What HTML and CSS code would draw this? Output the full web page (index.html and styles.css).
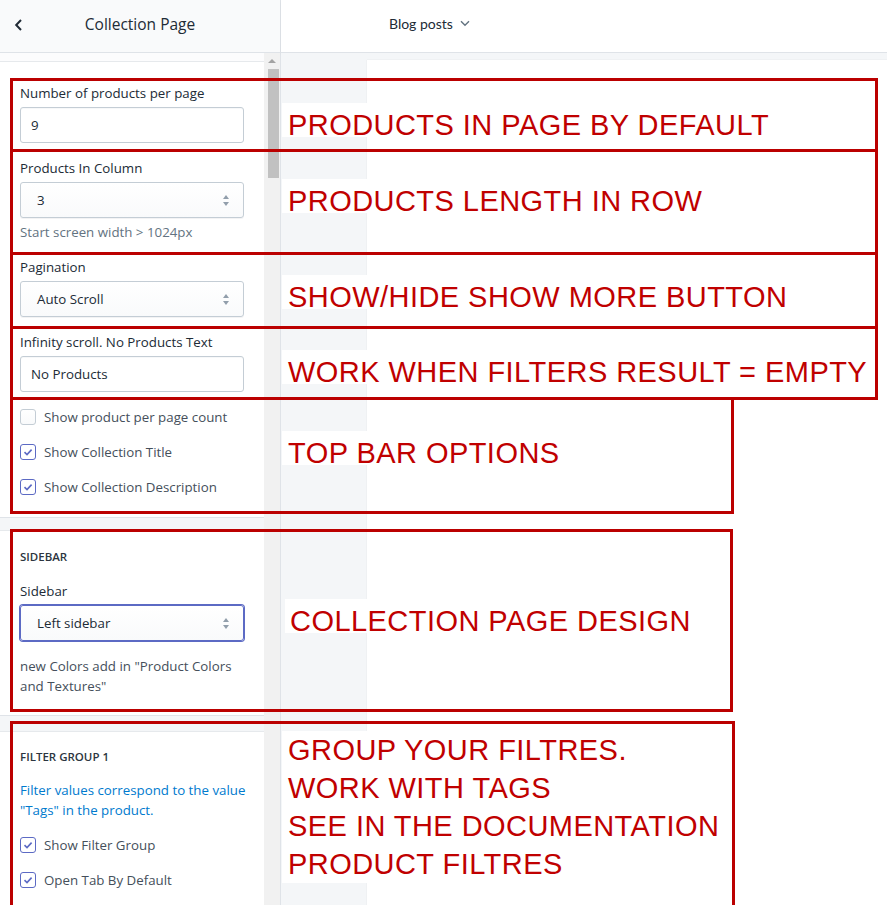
FILE: index.html
```html
<!DOCTYPE html>
<html lang="en">
<head>
<meta charset="utf-8">
<title>Collection Page</title>
<link rel="stylesheet" href="styles.css">
</head>
<body>
<div class="app">
  <aside class="sidebar">
    <header class="side-head">
      <span class="back"><svg width="9" height="12" viewBox="0 0 9 12"><path d="M7 1 L2.2 6 L7 11" fill="none" stroke="#212b36" stroke-width="2"/></svg></span>
      <h1 class="side-title">Collection Page</h1>
      <span></span>
    </header>
    <div class="side-body">
      <div class="side-scroll">
        <div class="top-strip"></div>
        <section class="card card-main">
          <div class="field">
            <div class="label">Number of products per page</div>
            <div class="input">9</div>
          </div>
          <div class="field">
            <div class="label">Products In Column</div>
            <div class="select"><span>3</span><span class="arrows"></span></div>
            <div class="help">Start screen width &gt; 1024px</div>
          </div>
          <div class="field">
            <div class="label">Pagination</div>
            <div class="select"><span>Auto Scroll</span><span class="arrows"></span></div>
          </div>
          <div class="field">
            <div class="label">Infinity scroll. No Products Text</div>
            <div class="input">No Products</div>
          </div>
          <div class="check"><span class="box"></span><span>Show product per page count</span></div>
          <div class="check"><span class="box on"><svg width="14" height="14" viewBox="0 0 14 14"><path d="M3.5 7.2 L6 9.6 L10.6 4.6" fill="none" stroke="#5c6ac4" stroke-width="1.6"/></svg></span><span>Show Collection Title</span></div>
          <div class="check"><span class="box on"><svg width="14" height="14" viewBox="0 0 14 14"><path d="M3.5 7.2 L6 9.6 L10.6 4.6" fill="none" stroke="#5c6ac4" stroke-width="1.6"/></svg></span><span>Show Collection Description</span></div>
        </section>
        <section class="card card-sidebar">
          <div class="heading">SIDEBAR</div>
          <div class="field">
            <div class="label">Sidebar</div>
            <div class="select focus"><span>Left sidebar</span><span class="arrows"></span></div>
          </div>
          <div class="note">new Colors add in "Product Colors and Textures"</div>
        </section>
        <section class="card card-filter">
          <div class="heading">FILTER GROUP 1</div>
          <div class="info">Filter values correspond to the value "Tags" in the product.</div>
          <div class="check"><span class="box on"><svg width="14" height="14" viewBox="0 0 14 14"><path d="M3.5 7.2 L6 9.6 L10.6 4.6" fill="none" stroke="#5c6ac4" stroke-width="1.6"/></svg></span><span>Show Filter Group</span></div>
          <div class="check"><span class="box on"><svg width="14" height="14" viewBox="0 0 14 14"><path d="M3.5 7.2 L6 9.6 L10.6 4.6" fill="none" stroke="#5c6ac4" stroke-width="1.6"/></svg></span><span>Open Tab By Default</span></div>
        </section>
      </div>
      <div class="scrollbar"><span class="sb-arrow"></span><span class="sb-thumb"></span></div>
    </div>
  </aside>
  <main class="main">
    <div class="topbar">
      <span>Blog posts</span>
      <svg width="10" height="7" viewBox="0 0 10 7"><path d="M1 1.2 L5 5.2 L9 1.2" fill="none" stroke="#637381" stroke-width="1.4"/></svg>
    </div>
    <div class="canvas"><div class="preview"></div></div>
  </main>
</div>

<div class="notes">
  <div class="nbox nb1"></div>
  <div class="nbox nb2"></div>
  <div class="nbox nb3"></div>
  <div class="nbox nb4"></div>
  <div class="nbox nb5"></div>
  <div class="nbox nb6"></div>
  <div class="nbox nb7"></div>
  <div class="ntext nt1">PRODUCTS IN PAGE BY DEFAULT</div>
  <div class="ntext nt2">PRODUCTS LENGTH IN ROW</div>
  <div class="ntext nt3">SHOW/HIDE SHOW MORE BUTTON</div>
  <div class="ntext nt4">WORK WHEN FILTERS RESULT = EMPTY</div>
  <div class="ntext nt5">TOP BAR OPTIONS</div>
  <div class="ntext nt6">COLLECTION PAGE DESIGN</div>
  <div class="ntext nt7">GROUP YOUR FILTRES.<br>WORK WITH TAGS<br>SEE IN THE DOCUMENTATION<br>PRODUCT FILTRES</div>
</div>
</body>
</html>
```
FILE: styles.css
```css
html, body {
  margin: 0;
  width: 887px;
  height: 905px;
  overflow: hidden;
}
body {
  position: relative;
  font-family: "Open Sans", "Segoe UI", sans-serif;
  color: #212b36;
  background: #fff;
}
.app {
  display: flex;
  height: 905px;
}
.sidebar {
  width: 280px;
  flex: none;
  border-right: 1px solid #dfe3e8;
  display: flex;
  flex-direction: column;
}
.side-head {
  flex: none;
  border-bottom: 1px solid #dfe3e8;
  background: #f9fafb;
  display: grid;
  grid-template-columns: 40px 1fr 40px;
  align-items: center;
  box-sizing: border-box;
  padding-bottom: 4px;
  height: 53px;
}
.back {
  display: flex;
  padding-left: 14px;
  padding-top: 2px;
}
.side-title {
  margin: 0;
  font-size: 15.5px;
  font-weight: 400;
  text-align: center;
}
.side-body {
  flex: 1;
  min-height: 0;
  display: flex;
}
.side-scroll {
  flex: 1;
  overflow: hidden;
  background: #f4f6f8;
}
.top-strip {
  height: 8px;
  background: #fcfcfd;
}
.card {
  background: #fff;
  border-top: 1px solid #e6e9ec;
  border-bottom: 1px solid #dfe3e8;
  padding: 0 20px;
}
.card-main {
  padding-top: 21px;
  padding-bottom: 20px;
}
.card-sidebar {
  margin-top: 12px;
  padding-top: 16px;
  padding-bottom: 19px;
}
.card-filter {
  margin-top: 15px;
  padding-top: 15px;
  padding-bottom: 20px;
}
.field + .field,
.field + .check,
.check + .check {
  margin-top: 15px;
}
.label, .help, .check, .note, .info {
  font-size: 13.3px;
  line-height: 20px;
}
.label {
  margin-bottom: 4px;
}
.input, .select {
  height: 34px;
  border: 1px solid #c4cdd5;
  border-radius: 3px;
  display: flex;
  align-items: center;
  font-size: 13.3px;
  box-sizing: content-box;
}
.input {
  padding-left: 10px;
  background: #fff;
  box-shadow: inset 0 1px 0 rgba(99,115,129,.05);
}
.select {
  padding: 0 14px 0 16px;
  justify-content: space-between;
  background: linear-gradient(#fff, #f9fafb);
  box-shadow: 0 1px 0 rgba(22,29,37,.05);
}
.select.focus {
  border-color: #5c6ac4;
  box-shadow: 0 0 0 1px #5c6ac4;
}
.arrows {
  width: 6px;
  height: 11px;
  display: flex;
  flex-direction: column;
  justify-content: space-between;
}
.arrows::before, .arrows::after {
  content: "";
  width: 0;
  height: 0;
  border-left: 3px solid transparent;
  border-right: 3px solid transparent;
}
.arrows::before {
  border-bottom: 4px solid #919eab;
}
.arrows::after {
  border-top: 4px solid #919eab;
}
.help {
  margin-top: 4px;
  color: #637381;
}
.check {
  display: flex;
  align-items: center;
  gap: 8px;
  color: #454f5b;
}
.box {
  width: 14px;
  height: 14px;
  border: 1px solid #c4cdd5;
  border-radius: 3px;
  background: linear-gradient(#fff, #f9fafb);
  display: flex;
  align-items: center;
  justify-content: center;
  flex: none;
}
.box.on {
  border-color: #5c6ac4;
  background: #fff;
}
.heading {
  font-size: 11.5px;
  line-height: 20px;
  font-weight: 600;
  color: #2c3540;
}
.card-sidebar .field {
  margin-top: 14px;
}
.note {
  margin-top: 15px;
  color: #454f5b;
}
.info {
  margin-top: 13px;
  margin-right: -10px;
  color: #007ace;
}
.info + .check {
  margin-top: 15px;
}
.scrollbar {
  width: 16px;
  flex: none;
  background: #f1f1f1;
  display: flex;
  flex-direction: column;
  align-items: center;
  padding-top: 6px;
  box-sizing: border-box;
}
.sb-arrow {
  width: 0;
  height: 0;
  border-left: 4px solid transparent;
  border-right: 4px solid transparent;
  border-bottom: 4px solid #a3a3a3;
}
.sb-thumb {
  margin-top: 6px;
  width: 11px;
  height: 109px;
  background: #c1c1c1;
  margin-left: 2px;
}
.main {
  flex: 1;
  display: flex;
  flex-direction: column;
}
.topbar {
  height: 53px;
  flex: none;
  border-bottom: 1px solid #dfe3e8;
  box-sizing: border-box;
  display: flex;
  align-items: center;
  gap: 7px;
  padding-left: 108px;
  padding-bottom: 5px;
  font-family: Lato, "Open Sans", sans-serif;
  font-size: 14px;
  color: #212b36;
  background: #fff;
  box-shadow: 0 1px 2px rgba(0,0,0,.05);
}
.canvas {
  flex: 1;
  background: #f4f6f8;
  padding: 7px 0 0 86px;
  display: flex;
}
.preview {
  flex: 1;
  background: #fff;
  box-shadow: 0 0 1px rgba(0,0,0,.12);
}

/* annotation overlay */
.notes {
  position: absolute;
  left: 0;
  top: 0;
  width: 887px;
  height: 905px;
  overflow: hidden;
  pointer-events: none;
}
.nbox {
  position: absolute;
  left: 10px;
  border: 3px solid #bb0000;
  box-sizing: border-box;
}
.nb1 { top: 78px; width: 868px; height: 74px; }
.nb2 { top: 149px; width: 868px; height: 106px; }
.nb3 { top: 252px; width: 868px; height: 77px; }
.nb4 { top: 326px; width: 868px; height: 74px; }
.nb5 { top: 397px; width: 724px; height: 117px; }
.nb6 { top: 529px; width: 723px; height: 183px; }
.nb7 { top: 721px; width: 725px; height: 300px; }
.ntext {
  position: absolute;
  left: 282px;
  padding-left: 6px;
  padding-right: 4px;
  background: #fff;
  font-family: "Liberation Sans", Arial, sans-serif;
  font-size: 29px;
  letter-spacing: 0.45px;
  color: #c00000;
  height: 34px;
  line-height: 44px;
  white-space: nowrap;
}
.nt1 { top: 103px; }
.nt2 { top: 179px; }
.nt3 { top: 275px; }
.nt4 { top: 350px; }
.nt5 { top: 431px; }
.nt6 { top: 599px; left: 285px; padding-left: 5px; }
.nt7 {
  top: 731px;
  height: auto;
  line-height: 38px;
}
```
